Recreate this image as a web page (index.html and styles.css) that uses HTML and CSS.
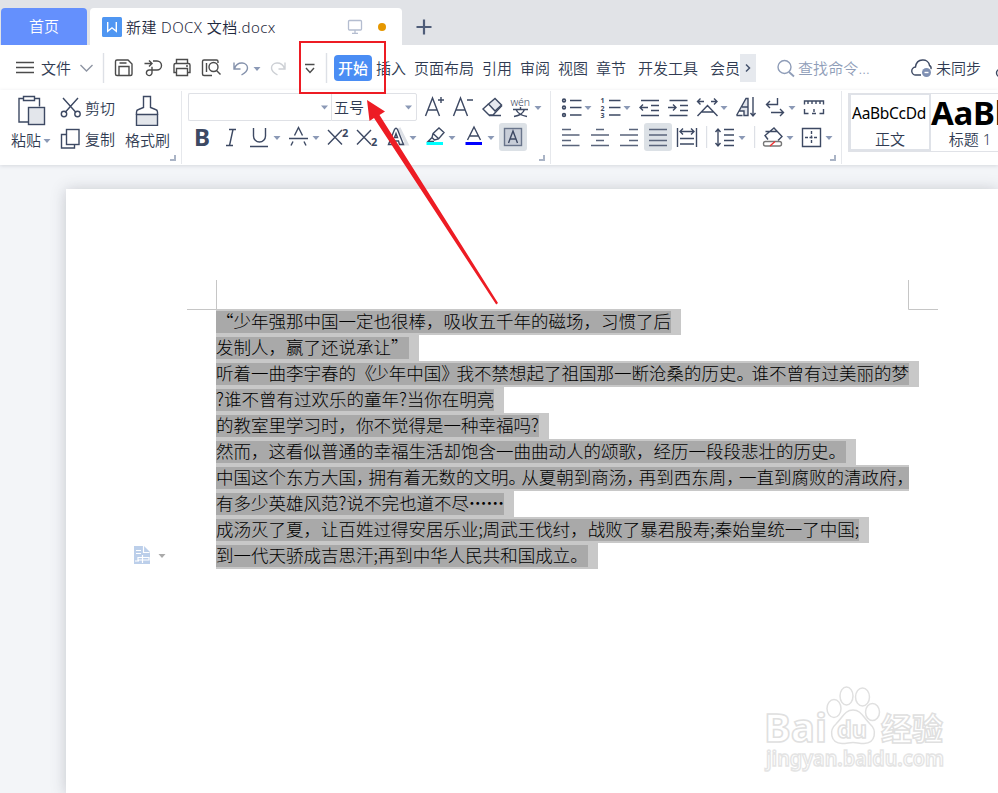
FILE: index.html
```html
<!DOCTYPE html>
<html lang="zh-CN">
<head>
<meta charset="utf-8">
<title>新建 DOCX 文档.docx</title>
<link rel="stylesheet" href="styles.css">
</head>
<body>
<div class="app">
  <header class="tabbar">
    <div class="tab home">首页</div>
    <div class="tab doc">
      <svg class="logo" width="20" height="20" viewBox="0 0 20 20"><rect width="20" height="20" rx="1.5" fill="#4f96f2"/><path d="M5.700 5v9.300l4.300-3.500 4.300 3.500V5" fill="none" stroke="#fff" stroke-width="1.400"/></svg>
      <span class="title">新建 DOCX 文档.docx</span>
      <svg class="monitor" width="16" height="16" viewBox="0 0 16 16" fill="none" stroke="#b4bdd0" stroke-width="1.300"><rect x="1.500" y="1.500" width="13" height="9.500" rx="1"/><path d="M8 11v3M5 14.300h6"/></svg>
      <span class="dot"></span>
    </div>
    <svg class="plus" width="16" height="16" viewBox="0 0 16 16"><path d="M8 .5v15M.5 8h15" stroke="#4f5d79" stroke-width="2.200"/></svg>
  </header>

  <nav class="menubar">
    <svg class="ic dark" width="26" height="32" viewBox="12 52 26 32"><path d="M16 62.500h18M16 67.500h18M16 72.500h18"/></svg>
    <span class="file">文件</span>
    <svg class="ic" width="32" height="32" viewBox="74 52 32 32"><path d="M80.500 65l6 6 6-6" stroke="#8e95a3"/><path d="M103.500 53v30" stroke="#dde0e6"/></svg>
    <svg class="ic dark" width="32" height="32" viewBox="106 52 32 32"><path d="M117 60h11l4 4v10q0 1.500-1.500 1.500h-13.500q-1.500 0-1.500-1.500v-12.500q0-1.500 1.500-1.500zM119.500 63h7M119 75v-8.500h10v8.500"/></svg>
    <svg class="ic dark" width="28" height="32" viewBox="138 52 28 32"><path d="M144.500 63.500h7M149 60.500l3 3-3 3M153 61h4a4.500 4.500 0 0 1 0 9h-7.500a2.800 2.800 0 1 0 2.500 2.800v-6"/></svg>
    <svg class="ic dark" width="30" height="32" viewBox="166 52 30 32"><path d="M176.500 64v-4.500h11v4.500M176.500 72.500h-2.500v-7.500q0-1.500 1.500-1.500h13q1.500 0 1.500 1.500v7.500h-2.500M176.500 68.500h11v7h-11zM186 66h2"/></svg>
    <svg class="ic dark" width="34" height="32" viewBox="196 52 34 32"><path d="M212 75.500h-8q-1.500 0-1.500-1.500v-12.500q0-1.500 1.500-1.500h12.500q1.500 0 1.500 1.500v1.500M206.500 63v9"/><circle cx="213.500" cy="67" r="4.500"/><path d="M216.500 70.500l4 4"/></svg>
    <svg class="ic" width="36" height="32" viewBox="230 52 36 32"><path d="M234 62.500v6.500h6.500M234.500 68.500c3-8 13-6.500 13-.5 0 3-2.500 5-6 7" stroke="#8592ac"/><path class="caret" d="M253.500 67h7l-3.500 4z"/></svg>
    <svg class="ic" width="34" height="32" viewBox="266 52 34 32"><path d="M285 62.500v6.500h-6.500M284.500 68.500c-3-8-13-6.500-13-.5 0 3 2.500 5 6 7" stroke="#cdd0d5"/></svg>
    <svg class="ic dark" width="34" height="32" viewBox="300 52 34 32"><path d="M305 64.500h9.500M306 68l4 4.500 4-4.500"/><path d="M326.500 53v30" stroke="#dde0e6"/></svg>
    <div class="menus">
      <span class="active">开始</span><span>插入</span><span>页面布局</span><span>引用</span><span>审阅</span><span>视图</span><span class="wide">章节</span><span class="wide">开发工具</span><span class="cut">会员</span>
    </div>
    <div class="more"><svg width="16" height="28" viewBox="0 0 16 28"><path d="M6 10.500l3.500 3.500L6 17.500" fill="none" stroke="#46546e" stroke-width="1.500"/></svg></div>
    <svg class="ic search" width="24" height="32" viewBox="774 52 24 32"><circle cx="784.500" cy="67" r="6.500" stroke="#8f9db8"/><path d="M789 72l5 4.500" stroke="#8f9db8" stroke-width="1.800"/></svg>
    <span class="hint">查找命令...</span>
    <svg class="ic" width="26" height="32" viewBox="909 52 26 32"><path d="M921 75h-5a4 4 0 0 1-.5-8c1-9 13-9 14-1.500q2 1 1.500 3.500"/><circle cx="926.500" cy="72.500" r="4.500" fill="#7f90b3" stroke="none"/><path d="M924.500 72.500h4" stroke="#fff"/></svg>
    <span class="sync">未同步</span>
    <svg class="ic" width="8" height="32" viewBox="992 52 8 32"><circle cx="1000" cy="73" r="3.500"/></svg>
  </nav>

  <section class="ribbon">
    <div class="group clip">
      <div class="big paste">
        <svg class="ic" width="32" height="32" viewBox="16 94 32 32"><path d="M23 98.500h-4v23.500h9M35 98.500h4.500v8M23.500 96.500h11v4h-11z"/><rect x="28.500" y="107.500" width="16" height="17" fill="#e3e6eb"/></svg>
        <div class="label">粘贴<svg width="8" height="8" viewBox="43 134 8 8"><path class="caret" d="M43.500 137h7l-3.500 4z"/></svg></div>
      </div>
      <div class="pair">
        <div class="small"><svg class="ic" width="25" height="28" viewBox="60 93 25 28"><path d="M63 97l13 14.500M78 97l-13 14.500"/><circle cx="64" cy="113" r="2.700"/><circle cx="77.500" cy="113" r="2.700"/></svg>剪切</div>
        <div class="small"><svg class="ic" width="25" height="28" viewBox="60 124 25 28"><path d="M66.500 133.500h-5v13.500h13v-3.500"/><rect x="66.500" y="128.500" width="12.500" height="15"/></svg>复制</div>
      </div>
      <div class="big brush">
        <svg class="ic" width="32" height="32" viewBox="131 94 32 32"><path d="M136.500 114.500h21v11h-21z" fill="#e3e6eb"/><path d="M136.500 115v-3q0-2 2-2.500l5-2v-11h7v11l5 2q2 .5 2 2.500v3"/></svg>
        <div class="label">格式刷</div>
      </div>
      <i class="corner"></i>
    </div>

    <div class="group font">
      <div class="row">
        <div class="combo name"><svg width="10" height="10"><path class="caret" d="M1 3.500h7l-3.500 4z"/></svg></div>
        <div class="combo size"><span>五号</span><svg width="10" height="10"><path class="caret" d="M1 3.500h7l-3.500 4z"/></svg></div>
        <svg class="ic" width="31" height="28" viewBox="417 93 31 28"><path d="M425.500 116l7-18 7 18M428 110h9M438 100h6M441 97v6"/></svg>
        <svg class="ic" width="31" height="28" viewBox="448 93 31 28"><path d="M453.500 116l7-18 7 18M456 110h9M467 100h6"/></svg>
        <svg class="ic" width="29" height="28" viewBox="479 93 29 28"><path d="M488.500 104l6.500-5.500 6.500 6.500-6.500 6z" fill="#e5e8ef"/><path d="M488.500 104l-5.500 5 6 6h4l9-9.500M489 115.500h12"/></svg>
        <svg class="ic" width="37" height="28" viewBox="508 93 37 28"><text x="510.500" y="106" font-size="10.500" textLength="19.500">wén</text><path d="M513 109.500h15M520.500 107v2.500M524.500 109.500q-2 5.500-10.500 7M516 109.500q2.500 5.500 11 7"/><path class="caret" d="M534.500 106h7l-3.500 4z"/></svg>
      </div>
      <div class="row">
        <svg class="ic" width="31" height="28" viewBox="188 123 31 28"><text class="b" x="194" y="145.500" font-size="23" textLength="16" lengthAdjust="spacingAndGlyphs">B</text></svg>
        <svg class="ic" width="28" height="28" viewBox="219 123 28 28"><path d="M229 129.500h7M226 145.500h7M233 129.500l-3.500 16"/></svg>
        <svg class="ic" width="40" height="28" viewBox="247 123 40 28"><path d="M253.500 128v8a6 6 0 0 0 12 0v-8M250 146.500h18"/><path class="caret" d="M273.500 136h7l-3.500 4z"/></svg>
        <svg class="ic" width="38" height="28" viewBox="287 123 38 28"><path d="M289 138.500h19M294.500 135.500l4-8 4 8M293 141.500l-2 4M304 141.500l2 4"/><path class="caret" d="M312.500 136h7l-3.500 4z"/></svg>
        <svg class="ic" width="28" height="28" viewBox="325 123 28 28"><path d="M328 130l14 14.500M342 130l-14 14.500"/><text class="b" x="342" y="136.500" font-size="11">2</text></svg>
        <svg class="ic" width="29" height="28" viewBox="353 123 29 28"><path d="M357 130l14 14.500M371 130l-14 14.500"/><text class="b" x="371" y="146" font-size="11">2</text></svg>
        <svg class="ic" width="39" height="28" viewBox="382 123 39 28"><path d="M399 128l8 16h-7" stroke="#dde0e6" stroke-width="3"/><path d="M388.500 144.500l6-15q1.500-2.500 3 0l6 15h-4l-1-3.500h-5l-1 3.500zM394.500 137.500l1.500-4 1.500 4z"/><path class="caret" d="M409.500 136h7l-3.500 4z"/></svg>
        <svg class="ic" width="40" height="28" viewBox="421 123 40 28"><path d="M433 133.500l6-5.500 5 4.500-5.500 6.500-4 1-2.500-2.500zM433 133.500l5.500 5M432 137.500l-4 4h6"/><path d="M426.500 143.500h16.500" stroke="#0ff" stroke-width="3"/><path class="caret" d="M448.500 136h7l-3.500 4z"/></svg>
        <svg class="ic" width="38" height="28" viewBox="461 123 38 28"><path d="M467.500 140l6.500-13 6.500 13M470 136h8"/><path d="M465.500 143.500h16.500" stroke="#00f" stroke-width="3"/><path class="caret" d="M487.500 136h7l-3.500 4z"/></svg>
        <svg class="ic on" width="28" height="28" viewBox="499 123 28 28"><rect x="504.500" y="128.500" width="17" height="17" fill="#c8ced8" stroke="#69758b"/><path d="M508.500 143l4.500-12 4.500 12M510 139h6"/></svg>
      </div>
      <i class="corner"></i>
    </div>

    <div class="group para">
      <div class="row">
        <svg class="ic" width="40" height="28" viewBox="558 93 40 28"><path d="M570 100.500h11.500M570 107.500h11.500M570 115h11.500"/><g stroke-width="1.600"><circle cx="564" cy="100.500" r="1.400"/><circle cx="564" cy="107.500" r="1.400"/><circle cx="564" cy="115" r="1.400"/></g><path class="caret" d="M584.500 106h7l-3.500 4z"/></svg>
        <svg class="ic" width="38" height="28" viewBox="598 93 38 28"><path d="M609 100.500h11.500M609 107.500h11.500M609 115h11.500"/><text class="b" x="600.500" y="103" font-size="7">1</text><text class="b" x="600.500" y="110.500" font-size="7">2</text><text class="b" x="600.500" y="118" font-size="7">3</text><path class="caret" d="M623.500 106h7l-3.500 4z"/></svg>
        <svg class="ic" width="29" height="28" viewBox="636 93 29 28"><path d="M641 100.500h18M651 105.500h8M651 110.500h8M641 115.500h18M640 107.500h8M643 104.500l-3 3 3 3"/></svg>
        <svg class="ic" width="29" height="28" viewBox="665 93 29 28"><path d="M669.500 100.500h18M680 105.500h8M680 110.500h8M669.500 115.500h18M668 107.500h8M673 104.500l3 3-3 3"/></svg>
        <svg class="ic" width="40" height="28" viewBox="694 93 40 28"><path d="M698 101.500h6M700.500 98.500l-3 3 3 3M711 101.500h6M714 98.500l3 3-3 3M697.500 116l10-10.500 10 10.500M701.500 112h12"/><path class="caret" d="M720.500 106h7l-3.500 4z"/></svg>
        <svg class="ic" width="29" height="28" viewBox="734 93 29 28"><path d="M736.500 115.500l9.500-17h2v17h-4v-4.500h-5M742 107h6M736.500 115.500h6" fill="#e2e5ec"/><path d="M753 97v19M750.500 113l2.500 3 2.500-3"/></svg>
        <svg class="ic" width="38" height="28" viewBox="763 93 38 28"><path d="M777.500 98v6.500h-10.500M770 101l-3.500 3.500 3.500 3.500M771 112.500h12M780 109l3.500 3.500-3.500 3.500"/><path class="caret" d="M788.500 106h7l-3.500 4z"/></svg>
        <svg class="ic" width="30" height="28" viewBox="801 93 30 28"><path d="M804.500 104.500v-3.500h19v3.500M808 101v3M812 101v3M816 101v3M820 101v3M804.500 109v4.500h4M812 113.500h4M819.500 113.500h4v-4.500M814 109v3"/></svg>
      </div>
      <div class="row">
        <svg class="ic al" width="28" height="28" viewBox="558 123 28 28"><path d="M562 129.500h9M562 135h17.500M562 140.500h9M562 145.500h17.500"/></svg>
        <svg class="ic al" width="29" height="28" viewBox="586 123 29 28"><path d="M596 129.500h8M591 135h18M596 140.500h8M591 145.500h18"/></svg>
        <svg class="ic al" width="29" height="28" viewBox="615 123 29 28"><path d="M629 129.500h9M620 135h18M629 140.500h9M620 145.500h18"/></svg>
        <svg class="ic on al" width="28" height="28" viewBox="644 123 28 28"><path d="M649 129.500h18M649 135h18M649 140.500h18M649 145.500h18"/></svg>
        <svg class="ic" width="34" height="28" viewBox="672 123 34 28"><path d="M677.500 128v19M696.500 128v19M680 131.500h14M683 128.500l-3 3 3 3M691 128.500l3 3-3 3M680 138.500h14M680 144h14"/></svg>
        <svg class="ic" width="48" height="28" viewBox="706 123 48 28"><path d="M706.500 126v22" stroke="#dde0e6"/><path d="M718 129v17M715.500 132l2.500-3 2.500 3M715.500 143l2.500 3 2.500-3M724 129.500h10M724 135h10M724 140.500h10M724 145.500h10"/><path class="caret" d="M738.500 136h7l-3.500 4z"/></svg>
        <svg class="ic" width="44" height="28" viewBox="754 123 44 28"><path d="M754.500 126v22" stroke="#dde0e6"/><path d="M768 139.500l-3-4 9-7.500 8 8.500-4 4M765.500 131.500h12"/><rect x="763.500" y="141.500" width="18" height="4.500" rx="2" stroke="#777"/><path d="M770 146l5-4.500" stroke="#e33"/><path class="caret" d="M786.500 136h7l-3.500 4z"/></svg>
        <svg class="ic" width="36" height="28" viewBox="798 123 36 28"><path d="M802.500 128.500h18v18h-18z"/><path d="M811.500 131v13M805 137.500h13" stroke-dasharray="3 1.500"/><path class="caret" d="M825.500 136h7l-3.500 4z"/></svg>
      </div>
      <i class="corner"></i>
    </div>

    <div class="gallery">
      <div class="style picked"><div class="sample">AaBbCcDd</div><div class="sname">正文</div></div>
      <div class="style"><div class="sample h1">AaBb</div><div class="sname">标题 1</div></div>
    </div>
  </section>

  <main class="work">
    <div class="page">
      <svg class="crop" width="751" height="30" viewBox="187 280 751 30"><path d="M216.500 280v29.500M187 309.500h29M908.500 280v29.500H938" fill="none" stroke="#c6c6c6"/></svg>
      <div class="text">
        <p><span>“少年强那中国一定也很棒，吸收五千年的磁场，习惯了后</span></p>
        <p><span>发制人，赢了还说承让”</span></p>
        <p><span>听着一曲李宇春的<b>《</b>少年中国<b>》</b>我不禁想起了祖国那一断沧桑的历史<b>。</b>谁不曾有过美丽的梦</span></p>
        <p><span>?谁不曾有过欢乐的童年?当你在明亮</span></p>
        <p><span>的教室里学习时，你不觉得是一种幸福吗?</span></p>
        <p><span>然而，这看似普通的幸福生活却饱含一曲曲动人的颂歌，经历一段段悲壮的历史。</span></p>
        <p class="full"><span>中国这个东方大国<b>，</b>拥有着无数的文明<b>。</b>从夏朝到商汤<b>，</b>再到西东周<b>，</b>一直到腐败的清政府<b>，</b></span></p>
        <p><span>有多少英雄风范?说不完也道不尽<em>……</em></span></p>
        <p><span>成汤灭了夏，让百姓过得安居乐业;周武王伐纣，战败了暴君殷寿;秦始皇统一了中国;</span></p>
        <p><span>到一代天骄成吉思汗;再到中华人民共和国成立。</span></p>
      </div>
      <svg class="pasteopt" width="34" height="20" viewBox="133 545 34 20"><path d="M134 546h10l6 6v12h-16z" fill="#bccfea"/><path d="M143.500 546v6.500h6M136 550.500h5M136 553.500h5M138 557.500h11v2.500h-11zM142.500 555v8M135 561h4" fill="none" stroke="#fff" stroke-width="1.200"/><path d="M158.500 554h7l-3.500 4z" fill="#aaa"/></svg>
    </div>
  </main>

  <svg class="watermark" width="190" height="100" viewBox="760 680 190 100">
    <g fill="#fff" stroke="#e0e0e0" stroke-width="1.500">
      <text class="wb" x="764" y="742" font-size="39" textLength="63" lengthAdjust="spacingAndGlyphs">Bai</text>
      <ellipse cx="834" cy="708.500" rx="7" ry="9"/><ellipse cx="846.500" cy="696" rx="6.500" ry="9"/><ellipse cx="862.500" cy="697" rx="7" ry="9"/><ellipse cx="872.500" cy="712" rx="7" ry="8.500"/>
      <path d="M853 710c8 0 10 7 17 14 7 6 6 19-6 19.500-5 0-7-1-11-1s-6 1-11 1c-12-.5-13-13.500-6-19.500 7-7 9-14 17-14z"/>
      <text class="wb" x="837" y="738" font-size="24" textLength="30" lengthAdjust="spacingAndGlyphs">du</text>
      <text class="wb" x="881" y="740" font-size="31" textLength="62" lengthAdjust="spacingAndGlyphs">经验</text>
      <text class="wb url" x="766" y="766" font-size="22" textLength="178" lengthAdjust="spacingAndGlyphs">jingyan.baidu.com</text>
    </g>
  </svg>
  <div class="redbox"></div>
  <svg class="arrow" width="140" height="210" viewBox="362 97 140 210"><path d="M367 100l18 11.500-5.500 3.500 118.500 188-1.800 1.500-122.200-186.500-4.500 3z" fill="#ed1c24"/></svg>
</div>
</body>
</html>
```
FILE: styles.css
```css
* { box-sizing: border-box; }
body {
  margin: 0;
  font: 15px/20px "Noto Sans", "Noto Sans CJK SC", sans-serif;
  font-weight: 350;
  color: #303b52;
}
svg { display: block; flex: none; }
.app {
  position: relative;
  display: flex;
  flex-direction: column;
  width: 998px;
  height: 793px;
  overflow: hidden;
  background: #f3f5f8;
}

/* Tabs */
.tabbar {
  display: flex;
  align-items: flex-end;
  height: 45px;
  padding-left: 1px;
  background: #e1e3e7;
}
.tab { height: 37px; border-radius: 4px 4px 0 0; }
.home {
  width: 86px;
  margin-right: 3px;
  background: #6490fd;
  color: #fff;
  line-height: 37px;
  text-align: center;
}
.doc {
  display: flex;
  align-items: center;
  width: 312px;
  padding: 0 16px 0 12px;
  background: #fff;
  color: #1f2a40;
}
.title { width: 153px; margin-left: 4px; letter-spacing: .4px; white-space: nowrap; }
.monitor { margin-left: auto; margin-right: 15px; }
.dot { width: 8px; height: 8px; border-radius: 50%; background: #e59700; }
.plus { margin: 0 0 10px 14px; }

/* Menu bar */
.menubar {
  display: flex;
  align-items: center;
  height: 45px;
  padding-left: 12px;
  background: #fff;
  white-space: nowrap;
}
.menubar > * { flex: none; }
.ic { fill: none; stroke: #3d4963; stroke-width: 1.4; }
.dark { stroke: #4b4b4b; }
.ic text { fill: #3d4963; stroke: none; font-family: "Noto Sans", "Noto Sans CJK SC", sans-serif; }
.ic .b { font-weight: 700; }
.caret, .ic .caret { fill: #8b99b6; stroke: none; }
.ic.al { stroke: #59647b; }
.on { background: #dce1e6; border-radius: 3px; }
.file { width: 36px; padding-left: 3px; }
.menus { display: flex; align-items: center; width: 406px; overflow: hidden; }
.menus span { flex: none; margin-right: 8px; }
.menus .wide { margin-right: 12px; }
.menus .cut { margin: 0; }
.menus .active {
  width: 38px;
  height: 26px;
  margin-right: 4px;
  border-radius: 4px;
  background: #4a8df4;
  color: #fff;
  font-weight: 500;
  line-height: 26px;
  text-align: center;
}
.more { width: 16px; height: 28px; background: #e6e9ee; }
.search { margin-left: 18px; }
.hint { width: 111px; color: #8f9db8; letter-spacing: .1px; }
.sync { width: 57px; padding-left: 1px; }

/* Ribbon */
.ribbon {
  display: flex;
  height: 75px;
  background: #fff;
  box-shadow: 0 1px 4px rgba(60, 70, 90, .16);
  z-index: 1;
}
.group {
  position: relative;
  display: flex;
  flex: none;
  height: 73px;
  margin-top: 1px;
  border-right: 1px solid #e6e8ec;
}
.corner {
  position: absolute;
  right: 5px;
  bottom: 3px;
  width: 6px;
  height: 6px;
  border: solid #aab4c6;
  border-width: 0 2px 2px 0;
}
.clip { width: 182px; }
.big { display: flex; flex: none; flex-direction: column; padding-top: 3px; }
.big svg { margin-bottom: 4px; }
.paste { width: 60px; padding-left: 11px; }
.paste > svg { margin-left: 5px; }
.brush { padding-left: 9px; }
.brush > svg { margin-left: 6px; }
.label { display: flex; align-items: center; white-space: nowrap; }
.label svg { margin: 0 0 0 2px; }
.pair { flex: none; width: 56px; padding-top: 3px; white-space: nowrap; }
.small { display: flex; align-items: center; height: 28px; margin-bottom: 3px; }
.font { flex-direction: column; gap: 2px; width: 369px; padding: 2px 0 0 6px; }
.para { flex-direction: column; gap: 2px; width: 291px; padding: 2px 0 0 7px; }
.row { display: flex; height: 28px; }
.combo {
  display: flex;
  align-items: center;
  justify-content: flex-end;
  height: 28px;
  border: 1px solid #dfe1e6;
}
.name { width: 143px; padding-right: 1px; border-radius: 2px 0 0 2px; border-right: 0; }
.size { justify-content: space-between; width: 86px; padding: 0 2px; border-radius: 0 2px 2px 0; }
.gallery {
  display: flex;
  flex: none;
  width: 180px;
  height: 59px;
  margin: 3px 0 0 6px;
  border: 1px solid #e0e2e7;
}
.style { flex: none; width: 82px; text-align: center; }
.picked { border: 2px solid #dfe2e8; border-top-width: 1px; }
.sample { height: 35px; color: #000; font: 15.5px/36px "Noto Sans", sans-serif; letter-spacing: -.3px; }
.picked .sample { margin-left: -2px; }
.sample.h1 { height: 36px; font: 700 33px/38px "Noto Sans", sans-serif; text-align: left; }
.sname { line-height: 18px; }
.style:last-child .sname { padding-right: 4px; }

/* Document */
.work { flex: 1; padding: 24px 0 0 66px; }
.page {
  position: relative;
  height: 604px;
  padding: 91px 0 0 121px;
  background: #fff;
  box-shadow: 0 1px 14px rgba(60, 65, 80, .26);
}
.crop { margin-bottom: -1px; }
.text {
  margin-left: 29px;
  color: #000;
  font: 300 17.5px/20px "Noto Sans CJK SC", sans-serif;
  text-spacing-trim: space-all;
}
.text p {
  width: max-content;
  height: 26px;
  margin: 0;
  padding: 2px 10px 2px 0;
  background: #c8c8c8;
}
.text p.full { padding-right: 0; }
.text span { display: block; height: 22px; background: #a9a9a9; white-space: nowrap; }
.text b { font-weight: inherit; letter-spacing: -2.3px; }
.text .full b { letter-spacing: -4.9px; }
.text em { font-style: normal; font-weight: 700; }
.pasteopt { position: absolute; left: 67px; top: 356px; }

/* Overlays */
.watermark { position: absolute; left: 760px; top: 680px; z-index: 2; }
.wb { font-family: "Noto Sans", "Noto Sans CJK SC", sans-serif; font-weight: 700; }
.url { font-weight: 600; stroke: #e4e4e4; }
.redbox {
  position: absolute;
  left: 299px;
  top: 41px;
  z-index: 2;
  width: 87px;
  height: 53px;
  border: 2px solid #ed1c24;
}
.arrow { position: absolute; left: 362px; top: 97px; z-index: 3; }
```
